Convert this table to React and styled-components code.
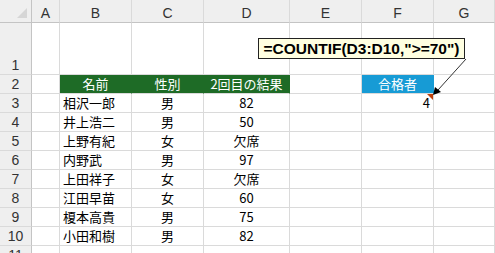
import React from "react";
import styled, { createGlobalStyle } from "styled-components";

const GlobalStyle = createGlobalStyle`
  html, body {
    margin: 0;
    padding: 0;
    background: #ffffff;
    overflow: hidden;
  }
  body {
    font-family: "Noto Sans CJK JP", "Liberation Sans", sans-serif;
  }
`;

const COLS = ["A", "B", "C", "D", "E", "F", "G"];
const COL_WIDTHS = "32px 28px 72px 72px 86px 72px 72px 61px";

const rows = [
  ["相沢一郎", "男", "82"],
  ["井上浩二", "男", "50"],
  ["上野有紀", "女", "欠席"],
  ["内野武", "男", "97"],
  ["上田祥子", "女", "欠席"],
  ["江田早苗", "女", "60"],
  ["榎本高貴", "男", "75"],
  ["小田和樹", "男", "82"],
];

const Sheet = styled.div`
  position: relative;
  width: 495px;
  height: 253px;
  overflow: hidden;
  display: grid;
  grid-template-columns: ${COL_WIDTHS};
  grid-template-rows: 23px 52px repeat(9, 19px) 19px;
  font-size: 13px;
  color: #000;
`;

const Corner = styled.div`
  background: #efefef;
  border-right: 1px solid #c4c4c4;
  border-bottom: 1px solid #c4c4c4;
  position: relative;
  &::after {
    content: "";
    position: absolute;
    right: 4px;
    bottom: 4px;
    width: 0;
    height: 0;
    border-left: 10px solid transparent;
    border-bottom: 10px solid #d6d6d6;
  }
`;

const ColHead = styled.div`
  background: #efefef;
  border-right: 1px solid #dadada;
  border-bottom: 1px solid #c4c4c4;
  display: flex;
  align-items: center;
  justify-content: center;
  padding-top: 3px;
  box-sizing: border-box;
  font-family: "Liberation Sans", sans-serif;
  font-size: 14px;
  color: #333;
`;

const RowHead = styled.div`
  background: #efefef;
  border-right: 1px solid #c4c4c4;
  border-bottom: 1px solid #dadada;
  display: flex;
  align-items: flex-end;
  justify-content: center;
  padding-bottom: 1px;
  box-sizing: border-box;
  font-family: "Liberation Sans", sans-serif;
  font-size: 14px;
  color: #333;
`;

const Cell = styled.div`
  border-right: 1px solid #dadada;
  border-bottom: 1px solid #dadada;
  background: ${(p) => p.$fill || "#fff"};
  color: ${(p) => (p.$fill ? "#fff" : "#000")};
  display: flex;
  align-items: flex-end;
  justify-content: ${(p) =>
    p.$align === "center" ? "center" : p.$align === "right" ? "flex-end" : "flex-start"};
  padding: 0 3px 0 3px;
  box-sizing: border-box;
  white-space: nowrap;
  line-height: 18px;
  position: relative;
  ${(p) => p.$fill && `border-right-color: ${p.$fill};`}
`;

const CommentMark = styled.span`
  position: absolute;
  top: 0;
  right: 0;
  width: 0;
  height: 0;
  border-left: 6px solid transparent;
  border-top: 6px solid #c0400b;
`;

const Callout = styled.div`
  position: absolute;
  left: 258px;
  top: 38px;
  width: 207px;
  height: 21px;
  box-sizing: border-box;
  background: #ffffe1;
  border: 1px solid #222;
  display: flex;
  align-items: center;
  justify-content: center;
  font-family: "Liberation Sans", sans-serif;
  font-weight: bold;
  font-size: 15.5px;
  white-space: nowrap;
`;

const Arrow = styled.svg`
  position: absolute;
  left: 0;
  top: 0;
  pointer-events: none;
`;

export default function App() {
  const body = [];
  body.push(<RowHead key="r1">1</RowHead>);
  for (let c = 0; c < 7; c++) body.push(<Cell key={`1-${c}`} />);

  body.push(<RowHead key="r2">2</RowHead>);
  body.push(<Cell key="2-0" />);
  body.push(<Cell key="2-1" $fill="#1e6b26" $align="center">名前</Cell>);
  body.push(<Cell key="2-2" $fill="#1e6b26" $align="center">性別</Cell>);
  body.push(<Cell key="2-3" $fill="#1e6b26" $align="center">2回目の結果</Cell>);
  body.push(<Cell key="2-4" />);
  body.push(<Cell key="2-5" $fill="#179bd5" $align="center">合格者</Cell>);
  body.push(<Cell key="2-6" />);

  rows.forEach((r, i) => {
    const n = i + 3;
    body.push(<RowHead key={`r${n}`}>{n}</RowHead>);
    body.push(<Cell key={`${n}-0`} />);
    body.push(<Cell key={`${n}-1`}>{r[0]}</Cell>);
    body.push(<Cell key={`${n}-2`} $align="center">{r[1]}</Cell>);
    body.push(<Cell key={`${n}-3`} $align="center">{r[2]}</Cell>);
    body.push(<Cell key={`${n}-4`} />);
    body.push(
      <Cell key={`${n}-5`} $align="right">
        {n === 3 ? "4" : ""}
        {n === 3 && <CommentMark />}
      </Cell>
    );
    body.push(<Cell key={`${n}-6`} />);
  });

  body.push(<RowHead key="r11">11</RowHead>);
  for (let c = 0; c < 7; c++) body.push(<Cell key={`11-${c}`} />);

  return (
    <>
      <GlobalStyle />
      <Sheet>
        <Corner />
        {COLS.map((c) => (
          <ColHead key={c}>{c}</ColHead>
        ))}
        {body}
        <Callout>=COUNTIF(D3:D10,"&gt;=70")</Callout>
        <Arrow width="495" height="253" viewBox="0 0 495 253">
          <line x1="466" y1="59" x2="438" y2="90" stroke="#333" strokeWidth="1" />
          <polygon points="433,95 435,87 441,92" fill="#000" />
        </Arrow>
      </Sheet>
    </>
  );
}
